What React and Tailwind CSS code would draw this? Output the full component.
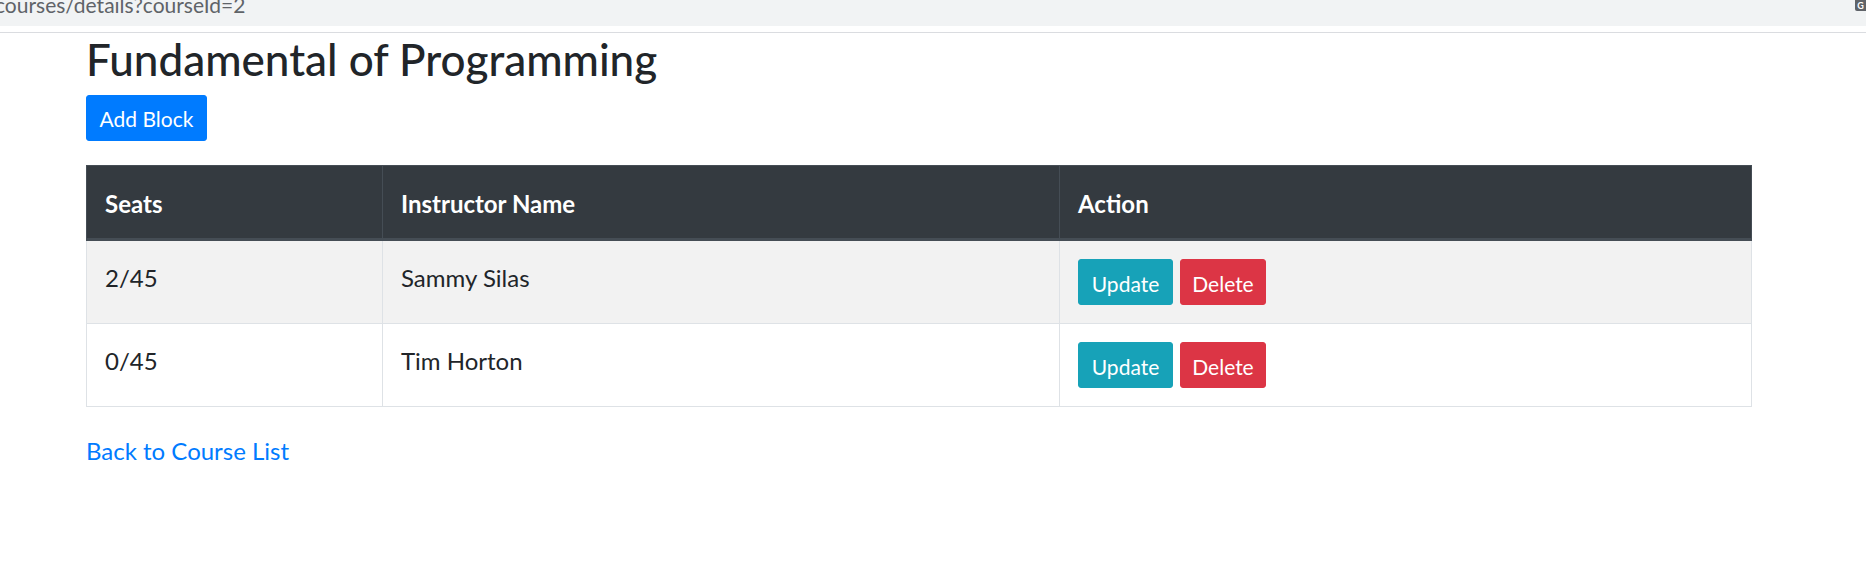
const blocks = [
  { id: 1, seats: "2/45", instructor: "Sammy Silas" },
  { id: 2, seats: "0/45", instructor: "Tim Horton" },
];

export default function App() {
  return (
    <div className="min-h-[579px] bg-white font-['Lato',sans-serif] text-[#212529]">
      {/* browser address strip */}
      <div className="flex h-[26px] items-start justify-between overflow-hidden bg-[#f1f3f4]">
        <span className="-ml-[5px] -mt-[8px] text-[21px] leading-[26px] whitespace-nowrap text-[#5f6368]">
          courses/details?courseId=2
        </span>
        <span className="flex h-[11px] w-[11px] items-center justify-center rounded-bl-[2px] bg-[#5f6368] text-[9px] font-bold leading-none text-white">
          G
        </span>
      </div>
      <div className="h-[6px]" />
      <div className="h-px bg-[#dadce0]" />

      <div className="pl-[86px]">
        <h1 className="text-[44px] font-medium leading-[53px] whitespace-nowrap">
          Fundamental of Programming
        </h1>

        <button className="mt-[9px] h-[46px] w-[121px] rounded-[3px] border border-[#007bff] bg-[#007bff] text-[21px] leading-none text-white">
          Add Block
        </button>

        <table className="mt-[24px] w-[1665px] table-fixed border-collapse text-[24px] leading-[36px]">
          <colgroup>
            <col className="w-[296px]" />
            <col className="w-[677px]" />
            <col className="w-[692px]" />
          </colgroup>
          <thead>
            <tr className="bg-[#343a40] text-left text-white">
              <th className="border border-b-[3px] border-[#454d55] px-[18px] pt-[20px] pb-[16px] align-top font-bold">Seats</th>
              <th className="border border-b-[3px] border-[#454d55] px-[18px] pt-[20px] pb-[16px] align-top font-bold">Instructor Name</th>
              <th className="border border-b-[3px] border-[#454d55] px-[18px] pt-[20px] pb-[16px] align-top font-bold">Action</th>
            </tr>
          </thead>
          <tbody>
            {blocks.map((b, i) => (
              <tr key={b.id} className={i % 2 === 0 ? "bg-[#f2f2f2]" : "bg-white"}>
                <td className="border border-[#dee2e6] px-[18px] pt-[19px] pb-[18px] align-top">{b.seats}</td>
                <td className="border border-[#dee2e6] px-[18px] pt-[19px] pb-[18px] align-top">{b.instructor}</td>
                <td className="border border-[#dee2e6] px-[18px] pt-[18px] pb-[18px] align-top">
                  <div className="flex gap-[7px]">
                    <button className="h-[46px] w-[95px] rounded-[3px] border border-[#17a2b8] bg-[#17a2b8] pt-[2px] text-[21px] leading-none text-white">
                      Update
                    </button>
                    <button className="h-[46px] w-[86px] rounded-[3px] border border-[#dc3545] bg-[#dc3545] pt-[2px] text-[21px] leading-none text-white">
                      Delete
                    </button>
                  </div>
                </td>
              </tr>
            ))}
          </tbody>
        </table>

        <a href="#" className="mt-[26px] block w-fit text-[24px] leading-[36px] text-[#007bff]">
          Back to Course List
        </a>
      </div>
    </div>
  );
}
